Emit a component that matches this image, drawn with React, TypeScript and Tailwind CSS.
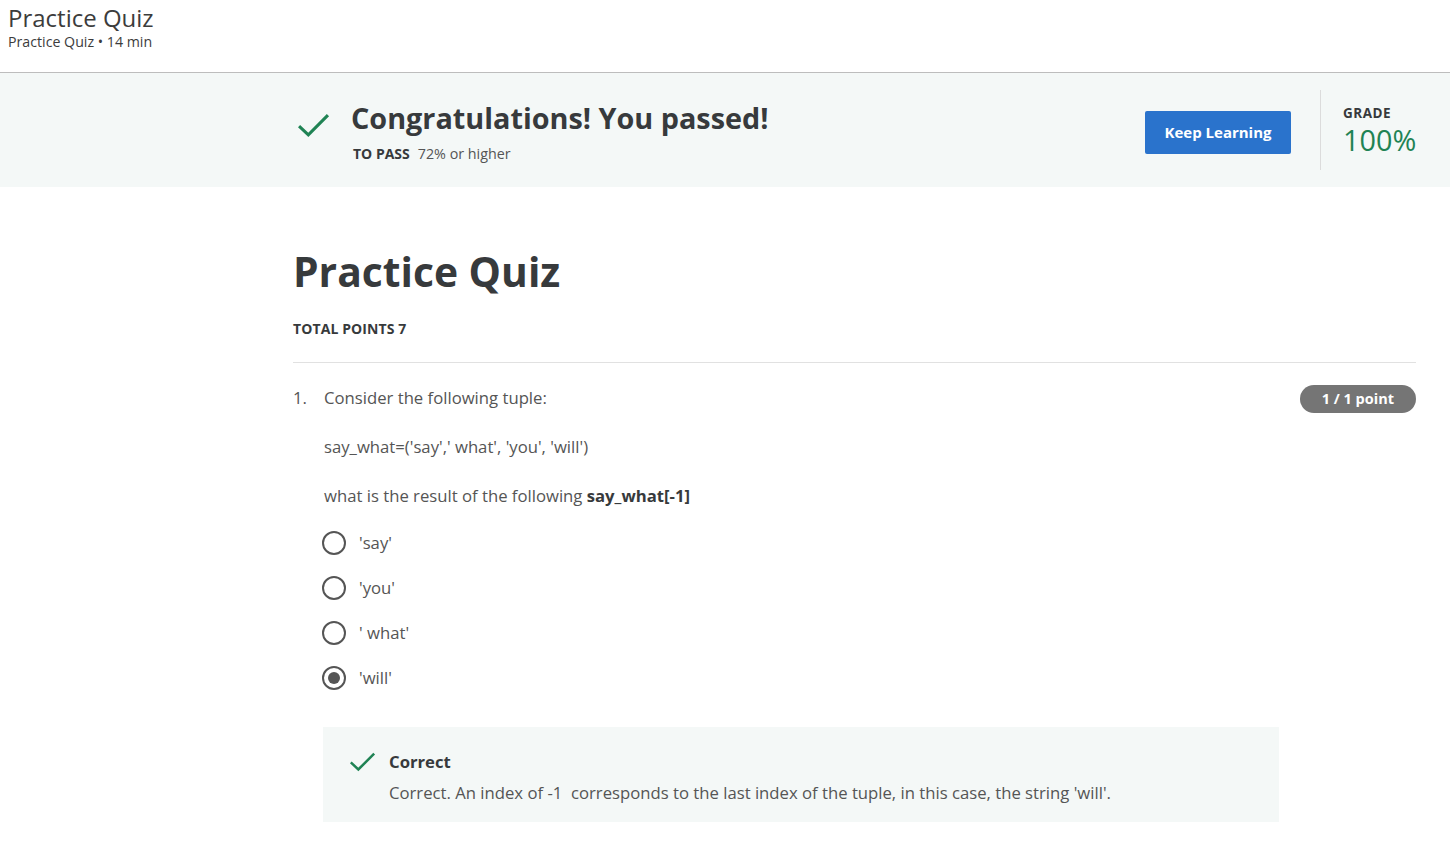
import React from 'react';

const CheckIcon = ({ className }: { className?: string }) => (
  <svg viewBox="0 0 32 24" className={className} fill="none">
    <path d="M2 12.5 L11 21 L30 2" stroke="#1f8354" strokeWidth="3" />
  </svg>
);

const Radio = ({ checked }: { checked?: boolean }) => (
  <span className="w-6 h-6 rounded-full border-2 border-[#555] flex items-center justify-center shrink-0">
    {checked && <span className="w-[12px] h-[12px] rounded-full bg-[#555]" />}
  </span>
);

const options = ["'say'", "'you'", "' what'", "'will'"];

export default function App() {
  return (
    <div className="min-h-[843px] bg-white text-[#373a3c]" style={{ fontFamily: '"Open Sans", sans-serif' }}>
      <header className="h-[73px] border-b border-[#bdbdbd] px-2 pt-[2px]">
        <h1 className="text-[24px] leading-[32px] text-[#3c3c3c]">Practice Quiz</h1>
        <p className="text-[14.2px] leading-[18px] text-[#3c3c3c] -mt-[1px]">Practice Quiz • 14 min</p>
      </header>

      <section className="h-[114px] bg-[#f4f8f7]">
        <div className="ml-[293px] mr-[34px] h-full flex items-center">
          <div className="flex items-start flex-1">
            <CheckIcon className="w-[33px] h-[25px] mt-[16px] ml-[4px]" />
            <div className="ml-[21px]">
              <div className="text-[28.8px] font-bold leading-[40px] text-[#373a3c] mt-[1px]">Congratulations! You passed!</div>
              <div className="mt-[6px] ml-[2px] flex items-baseline gap-[8px] leading-[20px]">
                <span className="text-[14px] font-bold text-[#373a3c]">TO PASS</span>
                <span className="text-[14.3px] text-[#555]">72% or higher</span>
              </div>
            </div>
          </div>
          <button className="w-[146px] h-[43px] bg-[#2a73cc] rounded-[2px] text-white text-[15px] font-bold mt-[4px]">
            Keep Learning
          </button>
          <div className="w-px h-[80px] bg-[#dcdcdc] ml-[29px] mr-[22px]" />
          <div className="w-[73px] mt-[2px]">
            <div className="text-[13.5px] font-bold leading-[18px] tracking-[0.5px] text-[#373a3c]">GRADE</div>
            <div className="text-[28.8px] leading-[36px] text-[#1f8354] whitespace-nowrap">100%</div>
          </div>
        </div>
      </section>

      <main className="ml-[293px] mr-[34px] pt-[57px]">
        <h2 className="text-[40.8px] font-bold leading-[54px] text-[#373a3c]">Practice Quiz</h2>
        <div className="mt-[22px] text-[14px] font-bold leading-[18px] tracking-[0.1px] text-[#373a3c]">TOTAL POINTS 7</div>
        <div className="mt-[24px] border-t border-[#e1e1e1]" />

        <div className="mt-[23px] flex">
          <span className="w-[31px] text-[16.7px] leading-[24px] text-[#555]">1.</span>
          <div className="flex-1 text-[16.7px] leading-[24px] text-[#555]">
            <p>Consider the following tuple:</p>
            <p className="mt-[25px]">say_what=('say',' what', 'you', 'will')</p>
            <p className="mt-[25px]">
              what is the result of the following <b className="text-[#373a3c]">say_what[-1]</b>
            </p>
            <div className="mt-[23px] flex flex-col gap-[21px]">
              {options.map((o, i) => (
                <label key={o} className="flex items-center gap-[13px] -ml-[2px]">
                  <Radio checked={i === 3} />
                  <span>{o}</span>
                </label>
              ))}
            </div>
            <div className="mt-[37px] w-[956px] -ml-[1px] h-[95px] bg-[#f4f8f7] flex pl-[26px] pt-[23px]">
              <CheckIcon className="w-[27px] h-[20px] mt-[2px] shrink-0" />
              <div className="ml-[13px]">
                <div className="font-bold text-[#373a3c] leading-[24px]">Correct</div>
                <div className="mt-[7px] leading-[24px]">
                  Correct. An index of -1&nbsp; corresponds to the last index of the tuple, in this case, the string 'will'.
                </div>
              </div>
            </div>
          </div>
          <span className="self-start h-[28px] px-[22px] rounded-full bg-[#757575] text-white text-[14.5px] font-bold leading-[28px] -mt-[1px]">
            1 / 1 point
          </span>
        </div>
      </main>
    </div>
  );
}
